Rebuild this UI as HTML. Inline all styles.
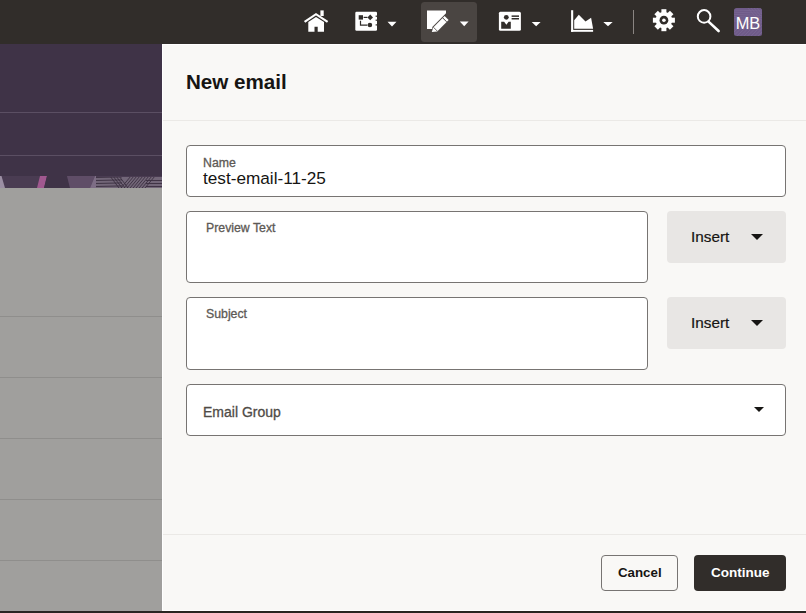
<!DOCTYPE html>
<html><head><meta charset="utf-8">
<style>
*{box-sizing:border-box;margin:0;padding:0}
html,body{width:806px;height:613px;overflow:hidden;background:#2f2a27;font-family:"Liberation Sans",sans-serif}
.abs{position:absolute}
#topbar{left:0;top:0;width:806px;height:44px;background:#312d2a}
#purple{left:0;top:44px;width:162px;height:132px;background:#3f3347}
.pl{left:0;width:162px;height:1px;background:#5b4f63}
#strip{left:0;top:176px;width:162px;height:12px}
#gray{left:0;top:188px;width:162px;height:423px;background:#a09f9d}
.gl{left:0;width:162px;height:1px;background:#8f8e8c}
#bottom{left:0;top:611px;width:806px;height:2px;background:#2a2522}
#panel{left:162px;top:44px;width:644px;height:567px;background:#f9f8f6;border-top:1px solid #fff;border-left:1px solid #fff;border-bottom:1px solid #fff}
.title{left:186px;top:70px;font-size:20.6px;font-weight:700;color:#161513;white-space:nowrap}
.hdiv{left:163px;top:120px;width:643px;height:1px;background:#ebe9e6}
.fdiv{left:163px;top:534px;width:643px;height:1px;background:#ebe9e6}
.box{background:#fff;border:1px solid #777472;border-radius:4px}
.lbl{font-size:12.3px;color:#5d5955;-webkit-text-stroke:0.3px currentColor;white-space:nowrap;line-height:1}
.val{font-size:17.2px;color:#161513;white-space:nowrap;line-height:1}
.ins{background:#e8e6e4;border-radius:4px}
.ins span{position:absolute;font-size:15.3px;color:#161513;-webkit-text-stroke:0.2px currentColor;line-height:1;white-space:nowrap}
.tri{position:absolute;width:0;height:0;border-left:6px solid transparent;border-right:6px solid transparent;border-top:6px solid #161513}
.btn{border-radius:4px;font-size:13px;font-weight:700;line-height:1;white-space:nowrap}
</style></head>
<body>
<div id="topbar" class="abs"></div>
<svg class="abs" style="left:0;top:0" width="806" height="44" viewBox="0 0 806 44">
  <!-- selected bg -->
  <rect x="421" y="2" width="56" height="40" rx="3.5" fill="#4a4542"/>
  <!-- home -->
  <g fill="#fff">
    <polyline points="304.6,21.8 316,14.2 327.6,21.8" fill="none" stroke="#fff" stroke-width="2.2"/>
    <rect x="320.4" y="10.4" width="3.3" height="5.6"/>
    <path d="M308.3,22 L316,17 L324,22 L324,31.8 L317.7,31.8 L317.7,26.7 L314.5,26.7 L314.5,31.8 L308.3,31.8 Z"/>
  </g>
  <!-- workflow -->
  <rect x="355.3" y="11.8" width="21.7" height="19" rx="1.2" fill="#fff"/>
  <g fill="#312d2a">
    <rect x="358.7" y="15.2" width="4.3" height="4.4"/>
    <rect x="363.6" y="16.8" width="3.8" height="1.2"/>
    <path d="M370.2,14.6 L373,17.4 L370.2,20.2 L367.4,17.4 Z"/>
    <path d="M359.9,20.8 h1.2 v3.8 h6.3 v1.2 h-7.5 Z"/>
    <circle cx="369.9" cy="25" r="2.3"/>
    <rect x="375.6" y="15.6" width="1.4" height="1.2"/>
    <rect x="375.6" y="19.6" width="1.4" height="1.2"/>
    <rect x="375.6" y="24.3" width="1.4" height="1.2"/>
  </g>
  <!-- pen -->
  <path d="M427,10.5 H446 V13.2 L432.3,26.9 V29 H427 Z" fill="#fff"/>
  <path d="M431.8,32 L433.2,27.4 L444.6,16 L448.6,20 L437.2,31.4 Z" fill="#fff"/>
  <line x1="442.6" y1="17.8" x2="446.6" y2="21.8" stroke="#4a4542" stroke-width="1"/>
  <line x1="433.4" y1="27.2" x2="437.4" y2="31.2" stroke="#4a4542" stroke-width="0.8"/>
  <!-- card -->
  <rect x="498.9" y="11.7" width="22" height="19" rx="1.5" fill="#fff"/>
  <g fill="#312d2a">
    <circle cx="506.3" cy="17.3" r="2.4"/>
    <path d="M501.2,21.8 H504.1 L506.4,24.7 L508.6,21.8 H510.8 V28.8 H501.2 Z"/>
    <rect x="511.6" y="15.4" width="7.4" height="1.5"/>
    <rect x="511.6" y="18" width="7.4" height="1.5"/>
  </g>
  <!-- chart -->
  <g fill="#fff">
    <rect x="571.1" y="10.2" width="2.1" height="21.6"/>
    <rect x="571.1" y="29.9" width="22" height="1.9"/>
    <path d="M574.2,20.3 L578.8,14.7 L585.5,21.4 L591.1,17.7 L593.1,28.8 L574.2,28.8 Z"/>
  </g>
  <!-- dropdown triangles -->
  <g fill="#fff">
    <path d="M387.5,21.7 H396.5 L392,26.4 Z"/>
    <path d="M459.8,21.6 H468.6 L464.2,26.2 Z"/>
    <path d="M531.7,22 H540.6 L536.15,26.2 Z"/>
    <path d="M603.3,22 H612.7 L608,26.2 Z"/>
  </g>
  <!-- separator -->
  <rect x="633" y="10" width="1" height="24" fill="#8a8582"/>
  <!-- gear -->
  <g transform="translate(663.9,20.2)" fill="#fff">
    <circle r="8.3"/>
    <g>
      <rect x="-2.5" y="-11" width="5" height="22"/>
      <rect x="-2.5" y="-11" width="5" height="22" transform="rotate(45)"/>
      <rect x="-2.5" y="-11" width="5" height="22" transform="rotate(90)"/>
      <rect x="-2.5" y="-11" width="5" height="22" transform="rotate(135)"/>
    </g>
    <circle r="4.4" fill="#312d2a"/>
    <circle r="1.8" fill="#fff"/>
  </g>
  <!-- search -->
  <circle cx="704.1" cy="16.4" r="6.3" fill="none" stroke="#fff" stroke-width="2"/>
  <line x1="708.8" y1="21.9" x2="718.6" y2="31" stroke="#fff" stroke-width="2.6" stroke-linecap="round"/>
  <!-- avatar -->
  <rect x="734" y="8" width="28" height="28" rx="2.5" fill="#6f5c89"/>
  <clipPath id="av"><rect x="734" y="8" width="28" height="28" rx="2.5"/></clipPath>
  <g clip-path="url(#av)" stroke="#8a78a3" stroke-width="0.6" opacity="0.55">
  <line x1="734" y1="10.0" x2="762" y2="11.0"/>
  <line x1="734" y1="12.2" x2="762" y2="13.2"/>
  <line x1="734" y1="14.4" x2="762" y2="15.4"/>
  <line x1="734" y1="16.6" x2="762" y2="17.6"/>
  <line x1="734" y1="18.8" x2="762" y2="19.8"/>
  <line x1="734" y1="21.0" x2="762" y2="22.0"/>
  <line x1="730.0" y1="36" x2="744.0" y2="22"/>
  <line x1="733.5" y1="36" x2="747.5" y2="22"/>
  <line x1="737.0" y1="36" x2="751.0" y2="22"/>
  <line x1="740.5" y1="36" x2="754.5" y2="22"/>
  <line x1="744.0" y1="36" x2="758.0" y2="22"/>
  <line x1="747.5" y1="36" x2="761.5" y2="22"/>
  <line x1="751.0" y1="36" x2="765.0" y2="22"/>
  <line x1="754.5" y1="36" x2="768.5" y2="22"/>
  <line x1="758.0" y1="36" x2="772.0" y2="22"/>
  <line x1="761.5" y1="36" x2="775.5" y2="22"/>
  <line x1="748" y1="8" x2="760" y2="22"/>
  <line x1="751" y1="8" x2="763" y2="22"/>
  <line x1="754" y1="8" x2="766" y2="22"/>
  <line x1="757" y1="8" x2="769" y2="22"/>
  <line x1="760" y1="8" x2="772" y2="22"/>
  </g>
</svg>
<div class="abs" style="left:734px;top:9.4px;width:28px;height:28px;color:#fff;font-size:16.4px;line-height:28px;text-align:center">MB</div>

<div id="purple" class="abs"></div>
<div class="abs pl" style="top:112px"></div>
<div class="abs pl" style="top:155px"></div>
<svg id="strip" class="abs" width="162" height="12" viewBox="0 0 162 12">
  <rect width="162" height="12" fill="#4a3c52"/>
  <path d="M0,0 H1.5 L5,12 H0 Z" fill="#9b8fa3"/>
  <path d="M40,0 H47 L44,12 H37 Z" fill="#a0588f"/>
  <path d="M47,0 H67 L70,12 H44 Z" fill="#3f3347"/>
  <path d="M67,0 H95 L90,12 H70 Z" fill="#5f4d67"/>
  <path d="M95,0 H96 V12 H90 Z" fill="#7d6d85"/>
  <rect x="96" y="0" width="66" height="12" fill="#726678"/>
  <line x1="96" y1="1.5" x2="122" y2="0.9" stroke="#3a2f40" stroke-width="0.9"/>
  <line x1="96" y1="4.5" x2="122" y2="3.9" stroke="#3a2f40" stroke-width="0.9"/>
  <line x1="96" y1="7.5" x2="122" y2="6.9" stroke="#3a2f40" stroke-width="0.9"/>
  <line x1="96" y1="10.5" x2="122" y2="9.9" stroke="#3a2f40" stroke-width="0.9"/>
  <line x1="110" y1="0" x2="119" y2="12" stroke="#3a2f40" stroke-width="0.9"/>
  <line x1="113" y1="0" x2="122" y2="12" stroke="#3a2f40" stroke-width="0.9"/>
  <line x1="116" y1="0" x2="125" y2="12" stroke="#3a2f40" stroke-width="0.9"/>
  <line x1="119" y1="0" x2="128" y2="12" stroke="#3a2f40" stroke-width="0.9"/>
  <line x1="121" y1="12" x2="131" y2="0" stroke="#3a2f40" stroke-width="0.9"/>
  <line x1="124" y1="12" x2="134" y2="0" stroke="#3a2f40" stroke-width="0.9"/>
  <line x1="127" y1="12" x2="137" y2="0" stroke="#3a2f40" stroke-width="0.9"/>
  <line x1="130" y1="12" x2="140" y2="0" stroke="#3a2f40" stroke-width="0.9"/>
  <line x1="133" y1="12" x2="143" y2="0" stroke="#3a2f40" stroke-width="0.9"/>
  <line x1="136" y1="12" x2="146" y2="0" stroke="#3a2f40" stroke-width="0.9"/>
  <line x1="139" y1="12" x2="149" y2="0" stroke="#3a2f40" stroke-width="0.9"/>
  <line x1="142" y1="12" x2="152" y2="0" stroke="#3a2f40" stroke-width="0.9"/>
  <line x1="145" y1="12" x2="155" y2="0" stroke="#3a2f40" stroke-width="0.9"/>
  <line x1="146" y1="4.5" x2="162" y2="4.5" stroke="#3a2f40" stroke-width="0.9"/>
  <line x1="146" y1="7.5" x2="162" y2="7.5" stroke="#3a2f40" stroke-width="0.9"/>
  <line x1="146" y1="10.5" x2="162" y2="10.5" stroke="#3a2f40" stroke-width="0.9"/>
  <rect x="96" y="0" width="66" height="1" fill="#4a3c52"/>
</svg>
<div id="gray" class="abs"></div>
<div class="abs gl" style="top:316px"></div>
<div class="abs gl" style="top:377px"></div>
<div class="abs gl" style="top:438px"></div>
<div class="abs gl" style="top:499px"></div>
<div class="abs gl" style="top:560px"></div>
<div id="bottom" class="abs"></div>

<div id="panel" class="abs"></div>
<div class="abs title">New email</div>
<div class="abs hdiv"></div>

<div class="abs box" style="left:186px;top:145px;width:600px;height:52px"></div>
<div class="abs lbl" style="left:203px;top:157px">Name</div>
<div class="abs val" style="left:203px;top:170px">test-email-11-25</div>

<div class="abs box" style="left:186px;top:211px;width:462px;height:72px"></div>
<div class="abs lbl" style="left:206px;top:222px">Preview Text</div>
<div class="abs ins" style="left:667px;top:211px;width:119px;height:52px"><span style="left:24px;top:18px">Insert</span><i class="tri" style="left:84px;top:23px"></i></div>

<div class="abs box" style="left:186px;top:297px;width:462px;height:73px"></div>
<div class="abs lbl" style="left:206px;top:308px">Subject</div>
<div class="abs ins" style="left:667px;top:297px;width:119px;height:52px"><span style="left:24px;top:18px">Insert</span><i class="tri" style="left:84px;top:23px"></i></div>

<div class="abs box" style="left:186px;top:384px;width:600px;height:52px"></div>
<div class="abs lbl" style="left:203px;top:405px;font-size:14px;color:#4f4b47">Email Group</div>
<i class="tri" style="left:754px;top:407px;border-left-width:5px;border-right-width:5px;border-top-width:5px"></i>

<div class="abs fdiv"></div>
<div class="abs btn" style="left:601px;top:555px;width:77px;height:36px;border:1px solid #777472;background:#f9f8f6;color:#161513"></div>
<div class="abs btn" style="left:618px;top:566px;color:#161513;font-size:13.3px">Cancel</div>
<div class="abs btn" style="left:694px;top:555px;width:92px;height:36px;background:#312d2a"></div>
<div class="abs btn" style="left:711px;top:566px;color:#fff;font-size:13.5px">Continue</div>
</body></html>
